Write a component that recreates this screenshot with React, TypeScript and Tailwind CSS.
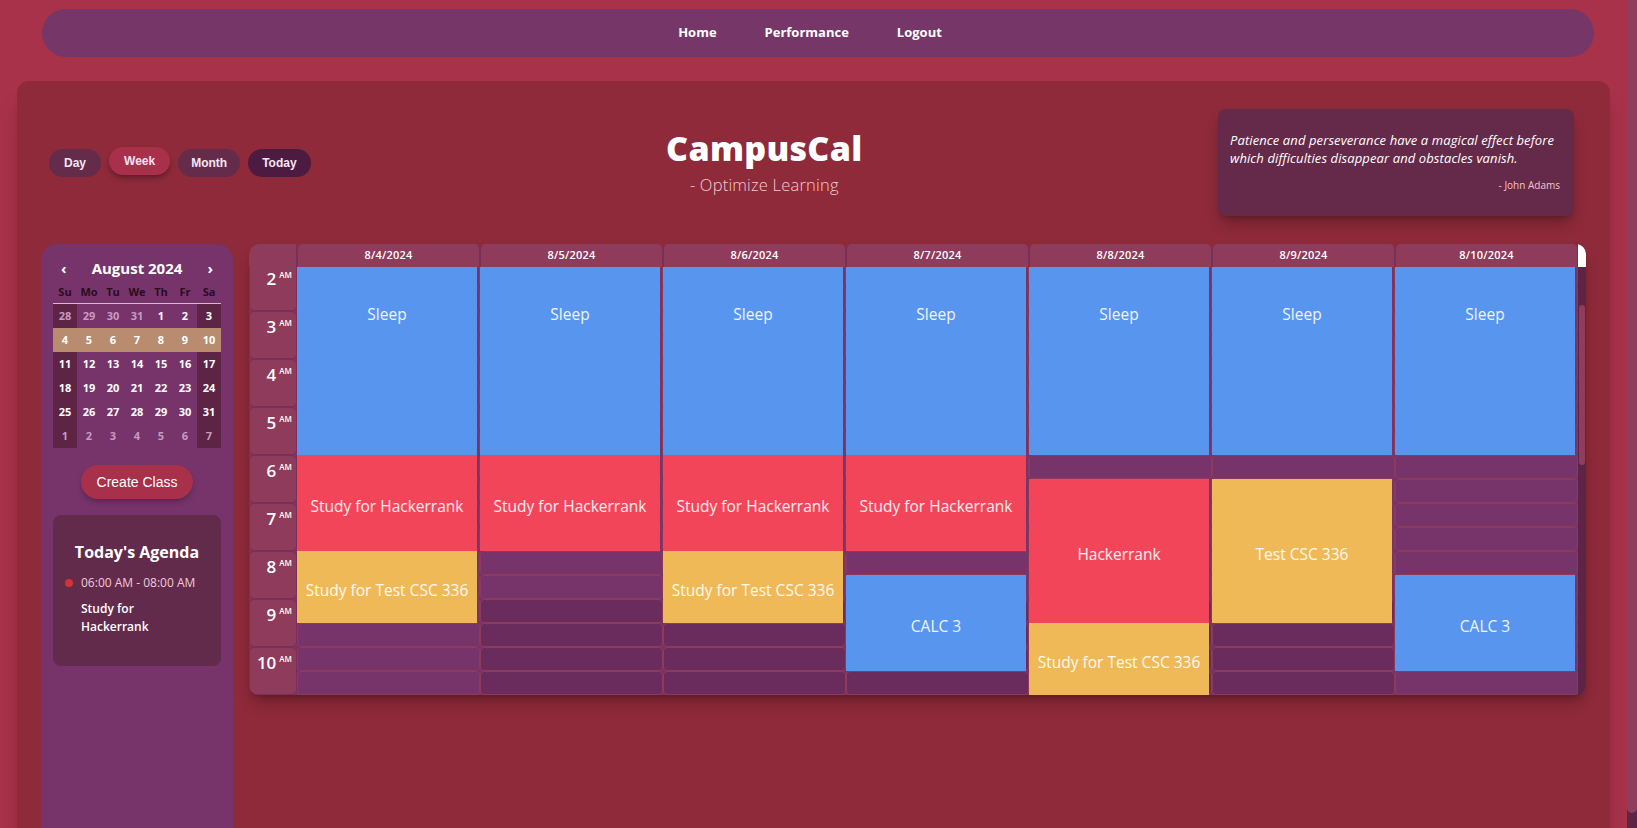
import { useMemo } from "react"

type CalEvent = { title: string; start: number; len: number; color: string }

const BLUE = "bg-[#5895ee]"
const RED = "bg-[#f3455a]"
const YELLOW = "bg-[#f0b957]"

const days = ["8/4/2024", "8/5/2024", "8/6/2024", "8/7/2024", "8/8/2024", "8/9/2024", "8/10/2024"]

// start / len in half-hour slots from 12 AM
const sleep: CalEvent = { title: "Sleep", start: 0, len: 12, color: BLUE }
const studyHr: CalEvent = { title: "Study for Hackerrank", start: 12, len: 4, color: RED }
const studyTest: CalEvent = { title: "Study for Test CSC 336", start: 16, len: 3, color: YELLOW }
const calc: CalEvent = { title: "CALC 3", start: 17, len: 4, color: BLUE }

const weekEvents: CalEvent[][] = [
  [sleep, studyHr, studyTest],
  [sleep, studyHr],
  [sleep, studyHr, studyTest],
  [sleep, studyHr, calc],
  [sleep, { title: "Hackerrank", start: 13, len: 6, color: RED }, { title: "Study for Test CSC 336", start: 19, len: 3, color: YELLOW }],
  [sleep, { title: "Test CSC 336", start: 13, len: 6, color: YELLOW }],
  [sleep, calc],
]

const monthCells = [
  [28, 29, 30, 31, 1, 2, 3],
  [4, 5, 6, 7, 8, 9, 10],
  [11, 12, 13, 14, 15, 16, 17],
  [18, 19, 20, 21, 22, 23, 24],
  [25, 26, 27, 28, 29, 30, 31],
  [1, 2, 3, 4, 5, 6, 7],
]

const MiniCalendar = () => {
  return (
    <div className="px-3 pt-[14px]">
      <div className="flex items-center justify-between px-2 h-5 text-white">
        <span className="text-[15px] font-bold leading-none">‹</span>
        <span className="text-[15px] font-bold">August 2024</span>
        <span className="text-[15px] font-bold leading-none">›</span>
      </div>
      <div className="grid grid-cols-7 mt-[6px] pb-[3px] border-b border-[#d8b8cc] text-[11px] font-bold text-[#2a0d1e]">
        {["Su", "Mo", "Tu", "We", "Th", "Fr", "Sa"].map((d) => (
          <div key={d} className="text-center leading-4">{d}</div>
        ))}
      </div>
      <div className="grid grid-cols-7">
        {monthCells.map((row, r) =>
          row.map((n, c) => {
            const outside = (r === 0 && n > 20) || (r === 5 && n < 10)
            const weekend = c === 0 || c === 6
            const bg = r === 1 ? "bg-[#b98c70]" : weekend ? "bg-[#5e2446]" : ""
            return (
              <div
                key={`${r}-${c}`}
                className={`h-6 flex items-center justify-center text-[11px] font-bold ${bg} ${
                  outside ? "text-[#c99ac0]" : "text-white"
                }`}
              >
                {n}
              </div>
            )
          })
        )}
      </div>
    </div>
  )
}

const Sidebar = () => (
  <aside className="w-[192px] shrink-0 h-[620px] rounded-t-2xl bg-[#76346a]">
    <MiniCalendar />
    <button className="block mx-auto mt-[17px] h-[34px] w-[112px] rounded-full bg-[#a8304a] shadow-md shadow-black/20 text-[14px] text-white font-['Liberation_Sans',Arial,sans-serif]">
      Create Class
    </button>
    <div className="mx-3 mt-4 rounded-lg bg-[#632b4b] pt-[25px] pb-[30px] pl-3 pr-3">
      <h3 className="text-center text-[16px] font-bold text-white leading-6">Today's Agenda</h3>
      <div className="mt-[10px] flex items-center gap-[8px]">
        <span className="w-2 h-2 rounded-full bg-[#d13434]"></span>
        <span className="text-[12px] text-[#f0cadb]">06:00 AM - 08:00 AM</span>
      </div>
      <div className="ml-4 mt-[8px] w-[100px] text-[12px] font-semibold leading-[18px] text-white">
        Study for Hackerrank
      </div>
    </div>
  </aside>
)

const hourLabel = (h: number) => (h === 0 ? 12 : h > 12 ? h - 12 : h)

const WeekGrid = () => {
  const slots = useMemo(() => Array.from({ length: 48 }, (_, i) => i), [])
  const hours = useMemo(() => Array.from({ length: 24 }, (_, i) => i), [])

  return (
    <div className="flex-1 self-start rounded-[10px] overflow-hidden shadow-lg shadow-black/25 bg-[#76346a]">
      {/* Header row */}
      <div className="flex h-[23px] bg-[#8f2a3a]">
        <div className="w-[48px] shrink-0 bg-[#8f3b5b] rounded-tl-[10px] border-r border-[#7a2f58]"></div>
        {days.map((d) => (
          <div
            key={d}
            className="flex-1 min-w-0 bg-[#8f3b5b] rounded-t-[5px] border-x border-[#7a2f58] flex items-center justify-center text-[11px] font-semibold tracking-[0.2px] text-white"
          >
            {d}
          </div>
        ))}
        <div className="w-[8px] shrink-0 bg-white rounded-tr-[8px]"></div>
      </div>

      {/* Body, scrolled to 2 AM */}
      <div className="flex h-[428px] overflow-hidden">
        <div className="w-[48px] shrink-0 -mt-[100px]">
          {hours.map((h) => (
            <div
              key={h}
              className="h-[48px] bg-[#8f3b5b] rounded-[5px] border border-[#7a2f58] flex justify-end pt-[4px] pr-[4px] text-white"
            >
              <span className="text-[17px] font-semibold leading-[22px]">{hourLabel(h)}</span>
              <span className="text-[8px] font-semibold leading-[14px] ml-[3px]">{h < 12 ? "AM" : "PM"}</span>
            </div>
          ))}
        </div>

        {weekEvents.map((events, col) => (
          <div key={col} className="flex-1 min-w-0 relative -mt-[100px]">
            {slots.map((s) => {
              const dark = col > 0 && col < 6 && s >= 18 && s < 34
              return (
                <div
                  key={s}
                  className={`h-6 rounded-[4px] border border-[#8e3a5a] ${dark ? "bg-[#6a2c5c]" : "bg-[#76346a]"}`}
                ></div>
              )
            })}
            {events.map((ev) => (
              <div
                key={ev.title + ev.start}
                className={`absolute left-0 right-[3px] pt-2 flex items-center justify-center text-[15.5px] text-white/90 whitespace-nowrap overflow-hidden ${ev.color}`}
                style={{ top: ev.start * 24, height: ev.len * 24 }}
              >
                {ev.title}
              </div>
            ))}
          </div>
        ))}

        {/* scrollbar */}
        <div className="w-[8px] shrink-0 bg-[#5e2446] pt-[38px] flex justify-center">
          <div className="w-[6px] h-[160px] rounded-full bg-[#8e3d5c]"></div>
        </div>
      </div>
    </div>
  )
}

const ViewButtons = () => (
  <div className="flex items-center gap-2 font-['Liberation_Sans',Arial,sans-serif] text-[12px] font-bold text-[#f3e6f0]">
    <button className="h-7 px-[15px] rounded-full bg-[#652b4b]">Day</button>
    <button className="h-7 px-[15px] rounded-full bg-[#a8304a] -translate-y-[2px] shadow-md shadow-black/25">Week</button>
    <button className="h-7 px-[13px] rounded-full bg-[#652b4b]">Month</button>
    <button className="h-7 px-[14px] rounded-full bg-[#4d1a42]">Today</button>
  </div>
)

export default function App() {
  return (
    <div className="h-[828px] overflow-hidden flex bg-[#a8324a] font-['Open_Sans',sans-serif]">
      <div className="flex-1 min-w-0 pt-[9px] px-[17px]">
        <nav className="ml-[25px] mr-[16px] h-[48px] rounded-full bg-[#763768] flex items-center justify-center gap-12 pr-4 text-[13px] font-bold text-white">
          <a>Home</a>
          <a>Performance</a>
          <a>Logout</a>
        </nav>

        <main className="mt-6 h-[760px] rounded-xl bg-[#8f2a3a] shadow-xl shadow-black/20 px-6 pt-7">
          <header className="flex items-center justify-between pl-2 pr-3">
            <ViewButtons />
            <div className="text-center">
              <h1 className="text-[34px] font-extrabold leading-10 tracking-[0.3px] text-white">CampusCal</h1>
              <p className="mt-[5px] text-[16.5px] font-light leading-6 tracking-[0.2px] text-[#f3cbd5]">- Optimize Learning</p>
            </div>
            <div className="w-[356px] rounded-lg bg-[#652a4a] shadow-lg shadow-black/25 px-3 pt-[22px] pb-6">
              <p className="text-[13px] italic font-medium leading-[18px] tracking-[0.1px] text-white">
                Patience and perseverance have a magical effect before which difficulties disappear and obstacles vanish.
              </p>
              <p className="mt-[11px] text-right pr-[2px] text-[10px] leading-[14px] text-[#f4c3cf]">- John Adams</p>
            </div>
          </header>

          <section className="flex gap-4 mt-7">
            <Sidebar />
            <WeekGrid />
          </section>
        </main>
      </div>
      <div className="w-[10px] shrink-0 bg-[#5e2446]">
        <div className="h-[813px] rounded-b-[5px] bg-[#8e3d5c]"></div>
      </div>
    </div>
  )
}
